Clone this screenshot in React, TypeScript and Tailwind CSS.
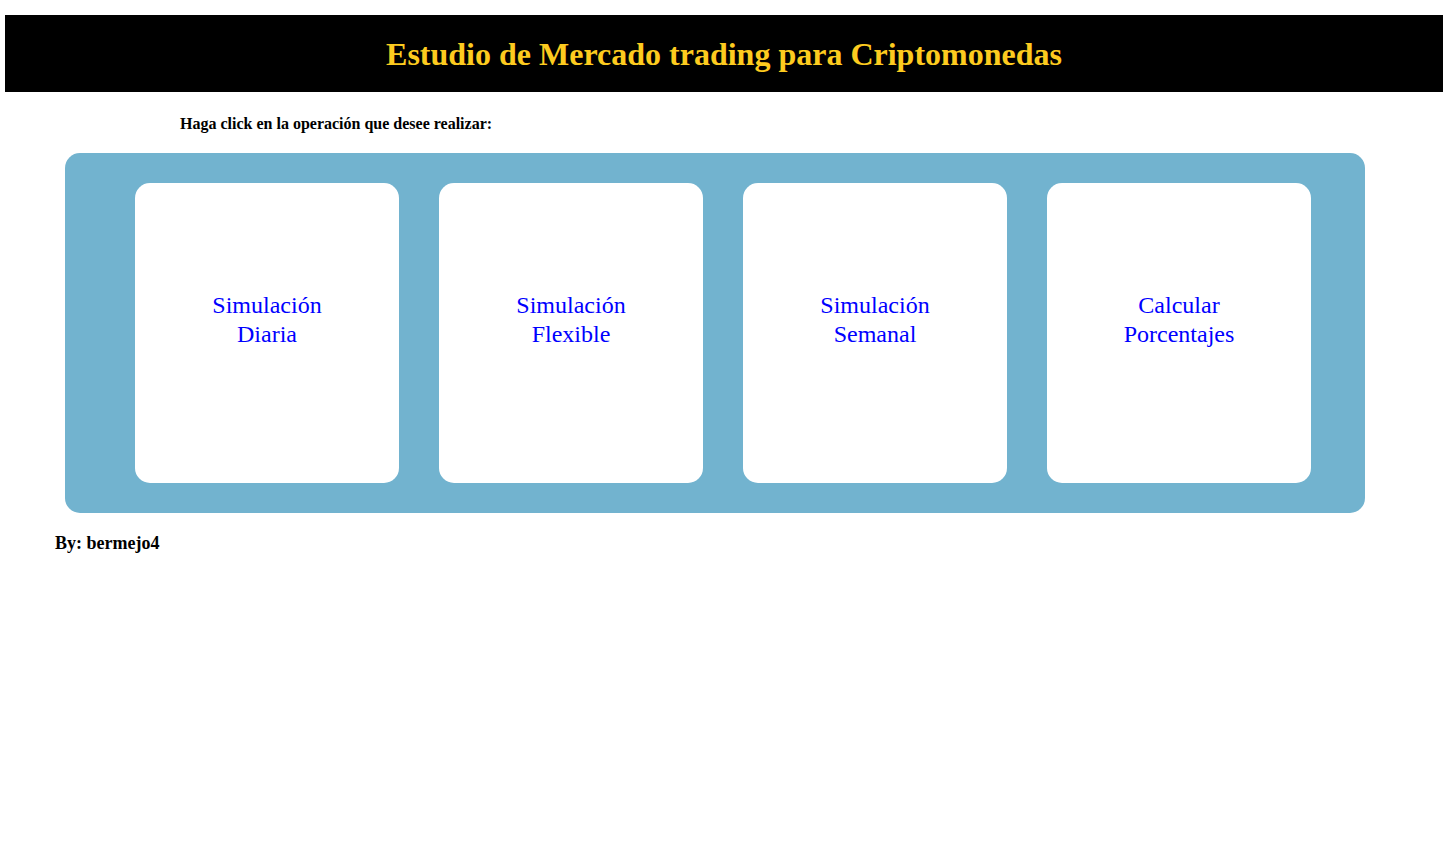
const options = [
  ["Simulación", "Diaria"],
  ["Simulación", "Flexible"],
  ["Simulación", "Semanal"],
  ["Calcular", "Porcentajes"],
];

export default function App() {
  return (
    <div className="min-h-[852px] bg-white font-['Liberation_Serif',serif] text-black">
      <div className="pt-[15px] pl-[5px]">
        <header className="bg-black w-[1438px] h-[77px] flex items-center justify-center">
          <h1 className="text-[32px] font-bold text-[#fdcb1f] leading-none">
            Estudio de Mercado trading para Criptomonedas
          </h1>
        </header>
      </div>
      <p className="ml-[180px] mt-[22px] text-[16px] font-bold leading-[19px]">
        Haga click en la operación que desee realizar:
      </p>
      <div className="ml-[65px] mt-[20px] w-[1300px] h-[360px] rounded-[15px] bg-[#72b3cf] pl-[70px] pt-[30px] flex gap-[40px]">
        {options.map(([a, b]) => (
          <a
            key={b}
            href="#"
            className="w-[264px] h-[300px] rounded-[15px] bg-white flex flex-col items-center pt-[108px] text-[24px] leading-[29px] text-[#0000ff]"
          >
            <span>{a}</span>
            <span>{b}</span>
          </a>
        ))}
      </div>
      <p className="ml-[55px] mt-[20px] text-[18px] font-bold leading-[21px]">By: bermejo4</p>
    </div>
  );
}
